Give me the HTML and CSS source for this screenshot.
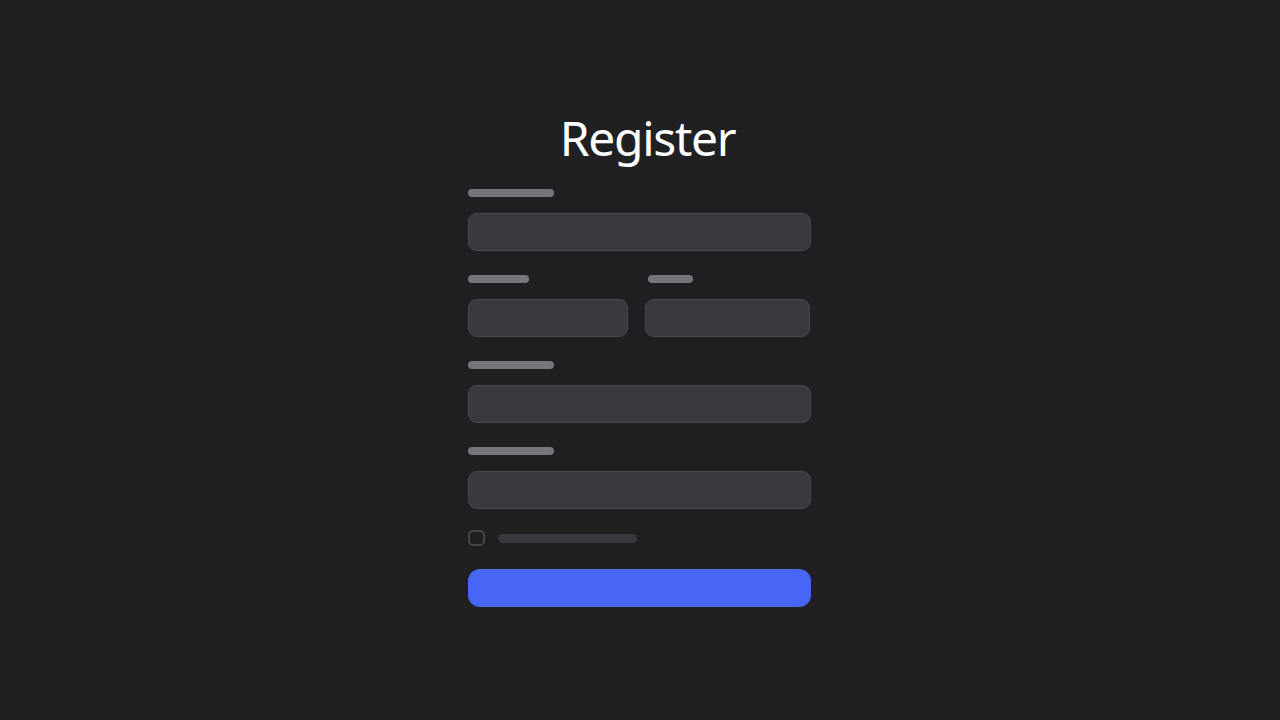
FILE: index.html
```html
<!DOCTYPE html>
<html lang="en">
<head>
<meta charset="utf-8">
<title>Register</title>
<link rel="stylesheet" href="styles.css">
</head>
<body>
<main class="page">
  <form class="register">
    <h1 class="title">Register</h1>

    <div class="field">
      <span class="label label-wide"></span>
      <div class="input"></div>
    </div>

    <div class="row">
      <div class="field field-left">
        <span class="label label-first"></span>
        <div class="input"></div>
      </div>
      <div class="field field-right">
        <span class="label label-last"></span>
        <div class="input"></div>
      </div>
    </div>

    <div class="field">
      <span class="label label-wide"></span>
      <div class="input"></div>
    </div>

    <div class="field">
      <span class="label label-wide"></span>
      <div class="input"></div>
    </div>

    <div class="check">
      <span class="checkbox"></span>
      <span class="check-text"></span>
    </div>

    <div class="submit"></div>
  </form>
</main>
</body>
</html>
```

FILE: styles.css
```css
html, body {
  margin: 0;
  padding: 0;
  background: #202022;
  height: 100%;
}

body {
  font-family: "Noto Sans", "Open Sans", sans-serif;
  color: #ffffff;
}

.page {
  display: flex;
  justify-content: center;
  padding: 114px 1px 0 0;
}

.register {
  width: 343px;
  display: flex;
  flex-direction: column;
}

.title {
  margin: 0 0 27px 0;
  padding-left: 16px;
  font-size: 48px;
  font-weight: 400;
  line-height: 48px;
  letter-spacing: -1.3px;
  text-align: center;
  color: #ffffff;
}

.field {
  display: flex;
  flex-direction: column;
  gap: 16px;
  margin-bottom: 24px;
}

.label {
  display: block;
  height: 8px;
  border-radius: 4px;
  background: #76757e;
}

.label-wide { width: 86px; }
.label-first { width: 61px; }
.label-last { width: 45px; margin-left: 3px; }

.input {
  height: 36px;
  border: 1px solid #4b4a53;
  border-radius: 9px;
  background: #39393f;
}

.row {
  display: flex;
  gap: 17px;
}

.field-left { width: 160px; }
.field-right { flex: 1; margin-right: 1px; }

.check {
  display: flex;
  align-items: center;
  gap: 13px;
  height: 16px;
  margin-top: -3px;
  margin-bottom: 23px;
}

.checkbox {
  box-sizing: border-box;
  width: 17px;
  height: 16px;
  border: 2px solid #45454c;
  border-radius: 5px;
}

.check-text {
  width: 139px;
  height: 9px;
  border-radius: 5px;
  background: #38383e;
}

.submit {
  height: 38px;
  border-radius: 12px;
  background: #4766f5;
}
```
